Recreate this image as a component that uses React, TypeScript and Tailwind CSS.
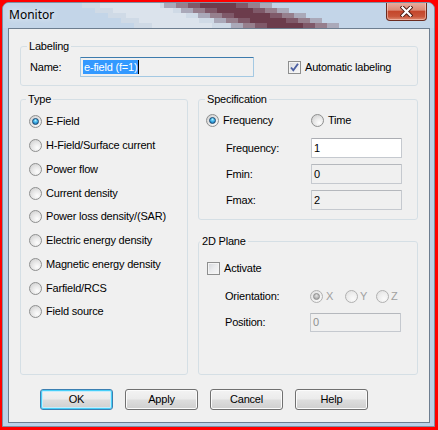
import type { ReactNode } from 'react'

type RadioProps = {
  checked?: boolean
  disabled?: boolean
}

const Radio = ({ checked, disabled }: RadioProps): JSX.Element => {
  const ring = disabled
    ? 'border-[#b1b1b1] bg-[radial-gradient(circle_at_65%_70%,#fafafa_0%,#eeeeee_50%,#dcdcdc_100%)]'
    : 'border-[#8e8f8f] bg-[radial-gradient(circle_at_65%_70%,#fdfdfd_0%,#e8e8e8_45%,#c9c9c9_100%)]'
  const dot = disabled
    ? 'border-[#8f8f8f] bg-[radial-gradient(circle_at_50%_35%,#e2e2e2_0%,#b5b5b5_60%,#9a9a9a_100%)]'
    : 'border-[#17466f] bg-[radial-gradient(circle_at_50%_30%,#a8f0ff_0%,#40b0e8_45%,#1767a8_100%)]'
  return (
    <span className={`flex h-[13px] w-[13px] shrink-0 items-center justify-center rounded-full border ${ring}`}>
      {checked ? <span className={`h-[7px] w-[7px] rounded-full border ${dot}`} /> : null}
    </span>
  )
}

const Checkbox = ({ checked }: { checked?: boolean }): JSX.Element => (
  <span className="flex h-[13px] w-[13px] shrink-0 items-center justify-center border border-[#8e8f8f] bg-[linear-gradient(135deg,#d2d5da_0%,#ebecee_50%,#f7f7f7_100%)] shadow-[inset_0_0_0_1px_#f4f4f4]">
    {checked ? (
      <svg width="11" height="11" viewBox="0 0 11 11">
        <path d="M2 5.5 L4.3 8.3 L9 1.8" fill="none" stroke="#4b5fa2" strokeWidth="1.9" />
      </svg>
    ) : null}
  </span>
)

const Group = ({
  title,
  legendClass = 'ml-[6px]',
  className = '',
  children,
}: {
  title: string
  legendClass?: string
  className?: string
  children: ReactNode
}): JSX.Element => (
  <fieldset className={`min-w-0 rounded-[3px] border border-[#d5dfe5] p-0 ${className}`}>
    <legend className={`px-[2px] leading-[13px] ${legendClass}`}>{title}</legend>
    {children}
  </fieldset>
)

const TextBox = ({
  value,
  variant = 'normal',
  height = 'h-[20px]',
}: {
  value: string
  variant?: 'normal' | 'readonly' | 'disabled'
  height?: string
}): JSX.Element => {
  const look =
    variant === 'normal'
      ? 'bg-white border-[#c5c9cf] border-t-[#abadb3] text-black'
      : variant === 'readonly'
        ? 'bg-[#f0f0f0] border-[#c5c9cf] border-t-[#b5b8bd] text-black'
        : 'bg-[#f0f0f0] border-[#c5c9cf] border-t-[#b5b8bd] text-[#8f8f8f]'
  return (
    <div className={`flex w-[91px] items-center rounded-[1px] border pl-[2px] ${height} ${look}`}>
      {value}
    </div>
  )
}

const DialogButton = ({ label, isDefault }: { label: string; isDefault?: boolean }): JSX.Element => (
  <button
    className={`flex h-[21px] w-[73px] items-center justify-center rounded-[3px] border bg-[linear-gradient(#f3f3f3_0%,#ebebeb_48%,#dddddd_52%,#cfcfcf_100%)] leading-[13px] text-black ${
      isDefault
        ? 'border-[#3c7fb1] shadow-[inset_0_0_0_1px_#48cff8,inset_0_0_0_2px_#c6ecfb]'
        : 'border-[#707070] shadow-[inset_0_0_0_1px_#fbfbfb]'
    }`}
  >
    {label}
  </button>
)

// wallpaper behind the glass: a diagonal streak, built from 5px slices that drift right
const slices = [0, 5, 10, 15, 20]
const glow = [
  { w: 48, color: '#cfdae6' },
  { w: 30, color: '#dbe3ec' },
]
const streak = [
  { w: 54, color: '#aaa9b9' },
  { w: 42, color: '#967f8d' },
  { w: 30, color: '#7f5969' },
  { w: 18, color: '#6c3c4c' },
]

const GlassBackdrop = (): JSX.Element => (
  <div className="absolute inset-0 bg-[#c3d5e8]">
    {slices.map((y) => {
      const t = (y + 2.5) / 25
      const glowX = 120 + 65 * t
      const streakX = 207 + 83 * t
      return (
        <div key={y}>
          {glow.map((g) => (
            <div
              key={`g${g.w}`}
              className="absolute h-[5px]"
              style={{ top: y, left: glowX - g.w, width: g.w * 2, background: g.color }}
            />
          ))}
          {streak.map((s) => (
            <div
              key={`s${s.w}`}
              className="absolute h-[5px]"
              style={{ top: y, left: streakX - s.w, width: s.w * 2, background: s.color }}
            />
          ))}
        </div>
      )
    })}
  </div>
)

const types = [
  'E-Field',
  'H-Field/Surface current',
  'Power flow',
  'Current density',
  'Power loss density/(SAR)',
  'Electric energy density',
  'Magnetic energy density',
  'Farfield/RCS',
  'Field source',
]

export default function App(): JSX.Element {
  return (
    <div className="h-[430px] w-[438px] bg-[#ff0000] pb-[3px] pl-[2px] pr-[3px] pt-[2px]">
      <div className="flex h-full flex-col overflow-hidden rounded-t-[7px] border border-[#7f90a3] bg-[#bcd1e8]">
        {/* title bar */}
        <div className="relative flex h-[25px] shrink-0 items-start justify-between overflow-hidden">
          <GlassBackdrop />
          <span className="relative pl-[6px] pt-[4px] font-['Noto_Sans',sans-serif] text-[12px] leading-[16px] text-black [text-shadow:0_0_6px_#ffffff]">
            Monitor
          </span>
          <span className="relative -mt-[1px] mr-[7px] flex h-[19px] w-[41px] items-center justify-center rounded-b-[4px] border border-t-0 border-[#6b2b1f] bg-[linear-gradient(180deg,#eab0a3_0%,#dc8a76_45%,#c4462b_52%,#c9553a_80%,#de8b72_100%)] shadow-[inset_0_0_0_1px_rgba(255,220,210,0.5)]">
            <svg width="13" height="11" viewBox="0 0 13 11">
              <path d="M2.5 1.5 L10.5 9.5 M10.5 1.5 L2.5 9.5" stroke="#4a1a12" strokeWidth="4" strokeLinecap="square" />
              <path d="M2.5 1.5 L10.5 9.5 M10.5 1.5 L2.5 9.5" stroke="#ffffff" strokeWidth="2.2" strokeLinecap="square" />
            </svg>
          </span>
        </div>

        {/* client area */}
        <div className="mb-[3px] ml-[5px] mr-[4px] flex flex-1 flex-col border border-[#6d7e90] bg-[#f0f0f0] px-[11px] pt-[11px] font-['Liberation_Sans',Arial,sans-serif] text-[11px] leading-[13px] tracking-[-0.2px] text-black">
          <Group title="Labeling">
            <div className="flex items-center pb-[8px] pl-[9px] pt-[4px]">
              <span className="w-[50px]">Name:</span>
              <div className="flex h-[20px] w-[174px] items-center rounded-[1px] border border-[#a4c9e3] border-t-[#3d7bad] pl-[2px]">
                <span className="bg-[#3399ff] px-[1px] leading-[14px] text-white">e-field (f=1)</span>
                <span className="h-[14px] w-[1px] bg-black" />
              </div>
              <div className="ml-[34px] mt-[1px] flex items-center gap-[4px]">
                <Checkbox checked />
                <span>Automatic labeling</span>
              </div>
            </div>
          </Group>

          <div className="mt-[7px] flex h-[282px] gap-[10px]">
            <Group title="Type" legendClass="ml-[5px]" className="w-[168px]">
              <div className="flex flex-col pl-[8px] pt-[4px]">
                {types.map((t, i) => (
                  <div key={t} className="flex h-[23.75px] items-center gap-[4px]">
                    <Radio checked={i === 0} />
                    <span>{t}</span>
                  </div>
                ))}
              </div>
            </Group>

            <div className="flex w-[220px] flex-col">
              <Group title="Specification">
                <div className="pb-[9px] pl-[7px] pt-[4px]">
                  <div className="flex h-[20px] items-center">
                    <div className="flex w-[105px] items-center gap-[4px]">
                      <Radio checked />
                      <span>Frequency</span>
                    </div>
                    <div className="flex items-center gap-[4px]">
                      <Radio />
                      <span>Time</span>
                    </div>
                  </div>
                  <div className="mt-[8px] grid grid-cols-[85px_91px] items-center gap-y-[6px] pl-[20px]">
                    <span>Frequency:</span>
                    <TextBox value="1" />
                    <span>Fmin:</span>
                    <TextBox value="0" variant="readonly" />
                    <span>Fmax:</span>
                    <TextBox value="2" variant="readonly" />
                  </div>
                </div>
              </Group>

              <Group title="2D Plane" legendClass="ml-[1px]" className="mt-[15px] flex-1">
                <div className="pl-[8px] pt-[10px]">
                  <div className="flex h-[20px] items-center gap-[4px]">
                    <Checkbox />
                    <span>Activate</span>
                  </div>
                  <div className="mt-[8px] flex h-[20px] items-center pl-[18px]">
                    <span className="w-[85px]">Orientation:</span>
                    <div className="flex w-[35px] items-center gap-[3px]">
                      <Radio checked disabled />
                      <span className="text-[#a0a0a0]">X</span>
                    </div>
                    <div className="flex w-[31px] items-center gap-[2px]">
                      <Radio disabled />
                      <span className="text-[#a0a0a0]">Y</span>
                    </div>
                    <div className="flex items-center gap-[2px]">
                      <Radio disabled />
                      <span className="text-[#a0a0a0]">Z</span>
                    </div>
                  </div>
                  <div className="mt-[7px] flex items-center pl-[18px]">
                    <span className="w-[85px]">Position:</span>
                    <TextBox value="0" variant="disabled" height="h-[19px]" />
                  </div>
                </div>
              </Group>
            </div>
          </div>

          <div className="mt-[14px] flex gap-[12px] pl-[20px]">
            <DialogButton label="OK" isDefault />
            <DialogButton label="Apply" />
            <DialogButton label="Cancel" />
            <DialogButton label="Help" />
          </div>
        </div>
      </div>
    </div>
  )
}
